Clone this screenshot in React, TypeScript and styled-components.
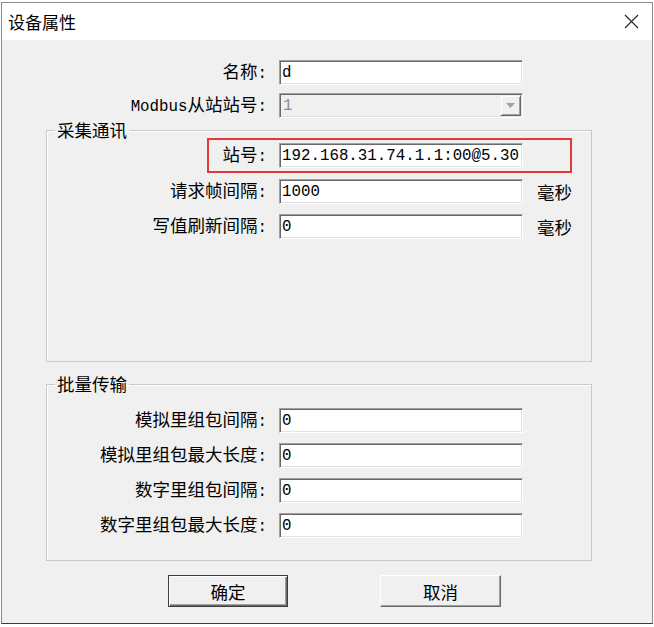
import React from 'react';
import styled, { createGlobalStyle } from 'styled-components';

const GlobalStyle = createGlobalStyle`
html, body {
	margin: 0;
	padding: 0;
	background: #fff;
}
body {
	font-family: "Noto Sans CJK SC", "Noto Sans", sans-serif;
	color: #000;
}
`;

const Window = styled.div`
box-sizing: border-box;
width: 652px;
height: 622px;
margin: 2px 0 0 1px;
border: 1px solid #8a8a8a;
border-bottom-color: #3a3a3a;
background: #f0f0f0;
display: flex;
flex-direction: column;
`;

const TitleBar = styled.div`
height: 37px;
background: #fff;
display: flex;
align-items: center;
justify-content: space-between;
padding: 0 13px 0 6px;
font-size: 17px;
`;

const Body = styled.div`
flex: 1;
display: flex;
flex-direction: column;
padding-top: 20px;
`;

const Row = styled.div<{ $labelW: number, $mt?: number }>`
display: grid;
grid-template-columns: ${p => p.$labelW}px 244px auto;
column-gap: 12px;
align-items: center;
height: 25px;
margin-top: ${p => p.$mt || 0}px;
`;

const Label = styled.div`
text-align: right;
font-size: 17.5px;
line-height: 20px;
white-space: nowrap;
`;

const Latin = styled.span`
font-family: "Liberation Mono", monospace;
font-size: 15.8px;
`;

const Unit = styled.div`
font-size: 17.5px;
line-height: 20px;
padding-left: 2px;
`;

const TextBox = styled.input`
box-sizing: border-box;
width: 244px;
height: 25px;
margin: 0;
padding: 0 0 0 2px;
border: 1px solid;
border-color: #a0a0a0 #fff #fff #a0a0a0;
box-shadow: inset 1px 1px #696969, inset -1px -1px #e3e3e3;
background: #fff;
font-family: "Liberation Mono", monospace;
font-size: 15.8px;
color: #000;
outline: none;
`;

const Combo = styled.div`
box-sizing: border-box;
width: 244px;
height: 25px;
border: 1px solid;
border-color: #a0a0a0 #fff #fff #a0a0a0;
box-shadow: inset 1px 1px #696969, inset -1px -1px #e3e3e3;
background: #f0f0f0;
display: flex;
align-items: center;
justify-content: space-between;
padding: 1px 1px 1px 3px;
font-family: "Liberation Mono", monospace;
font-size: 15.8px;
color: #8c8c8c;
`;

const DropButton = styled.div`
box-sizing: border-box;
width: 21px;
height: 21px;
border: 1px solid;
border-color: #f0f0f0 #696969 #696969 #f0f0f0;
box-shadow: inset 1px 1px #fff, inset -1px -1px #a0a0a0;
display: flex;
align-items: center;
justify-content: center;
`;

const Group = styled.fieldset<{ $mt: number, $h: number }>`
box-sizing: border-box;
width: 546px;
height: ${p => p.$h}px;
margin: ${p => p.$mt}px 0 0 44px;
padding: 0;
min-width: 0;
border: 1px solid #c9c9c9;
box-shadow: inset 1px 1px #fff;
`;

const Legend = styled.legend`
margin-left: 8px;
padding: 0 2px;
font-size: 17.5px;
line-height: 18px;
`;

const GroupRows = styled.div<{ $pt: number }>`
display: flex;
flex-direction: column;
gap: 10px;
padding-top: ${p => p.$pt}px;
`;

const Highlight = styled.div`
box-sizing: border-box;
width: 365px;
margin: -1px 0 0 160px;
padding: 3px 0;
border: 2px solid #e5383b;
`;

const ButtonRow = styled.div`
display: flex;
gap: 92px;
margin-top: 14px;
padding-left: 166px;
`;

const Button = styled.button<{ $default?: boolean, $w: number }>`
box-sizing: border-box;
width: ${p => p.$w}px;
height: 32px;
margin: 0;
padding: 0;
background: #f0f0f0;
font-family: "Noto Sans CJK SC", sans-serif;
font-size: 17.5px;
color: #000;
border: 1px solid;
border-color: ${p => p.$default ? '#3c3c3c' : '#fff #696969 #696969 #fff'};
box-shadow: ${p => p.$default
		? 'inset 1px 1px #fff, inset -1px -1px #696969, inset -2px -2px #a0a0a0'
		: 'inset -1px -1px #a0a0a0, inset 1px 1px #f0f0f0'};
`;

const CloseIcon = () =>
	<svg width="15" height="15" viewBox="0 0 15 15">
		<path d="M1 1 L14 14 M14 1 L1 14" stroke="#222" strokeWidth="1.1" fill="none" />
	</svg>;

const Arrow = () =>
	<svg width="9" height="5" viewBox="0 0 9 5">
		<path d="M0 0 H9 L4.5 5 Z" fill="#a0a0a0" />
	</svg>;

const C = ({ children }: { children?: React.ReactNode }) =>
	<Label>{children}<Latin>:</Latin></Label>;

const TOP_LABEL = 265;
const GROUP_LABEL = 220;

const batchRows = ["模拟里组包间隔", "模拟里组包最大长度", "数字里组包间隔", "数字里组包最大长度"];

export default function App() {
	return <>
		<GlobalStyle />
		<Window>
			<TitleBar>
				<span>设备属性</span>
				<CloseIcon />
			</TitleBar>
			<Body>
				<Row $labelW={TOP_LABEL}>
					<C>名称</C>
					<TextBox readOnly defaultValue="d" />
				</Row>
				<Row $labelW={TOP_LABEL} $mt={8}>
					<C><Latin>Modbus</Latin>从站站号</C>
					<Combo>
						<span>1</span>
						<DropButton><Arrow /></DropButton>
					</Combo>
				</Row>

				<Group $mt={3} $h={241}>
					<Legend>采集通讯</Legend>
					<Highlight>
						<Row $labelW={58}>
							<C>站号</C>
							<TextBox readOnly defaultValue="192.168.31.74.1.1:00@5.30" />
						</Row>
					</Highlight>
					<GroupRows $pt={6}>
						<Row $labelW={GROUP_LABEL}>
							<C>请求帧间隔</C>
							<TextBox readOnly defaultValue="1000" />
							<Unit>毫秒</Unit>
						</Row>
						<Row $labelW={GROUP_LABEL}>
							<C>写值刷新间隔</C>
							<TextBox readOnly defaultValue="0" />
							<Unit>毫秒</Unit>
						</Row>
					</GroupRows>
				</Group>

				<Group $mt={13} $h={186}>
					<Legend>批量传输</Legend>
					<GroupRows $pt={15}>
						{batchRows.map(name =>
							<Row key={name} $labelW={GROUP_LABEL}>
								<C>{name}</C>
								<TextBox readOnly defaultValue="0" />
							</Row>)}
					</GroupRows>
				</Group>

				<ButtonRow>
					<Button $default $w={120}>确定</Button>
					<Button $w={121}>取消</Button>
				</ButtonRow>
			</Body>
		</Window>
	</>;
}
